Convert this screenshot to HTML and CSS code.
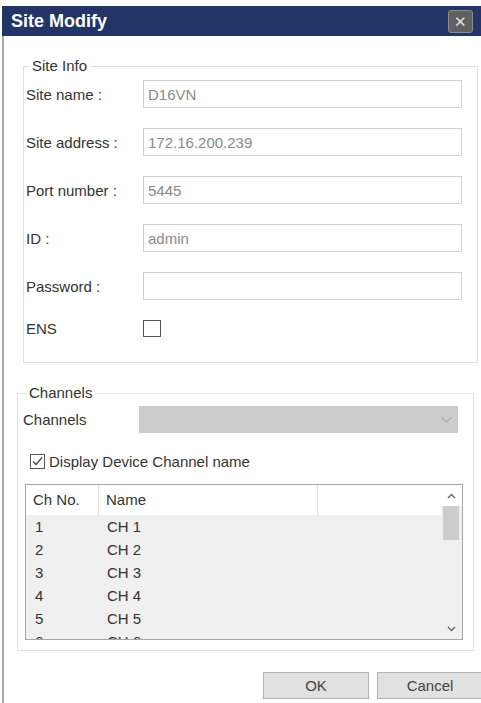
FILE: index.html
```html
<!DOCTYPE html>
<html lang="en">
<head>
  <meta charset="UTF-8">
  <title>Site Modify</title>
  <link rel="stylesheet" href="styles.css">
</head>
<body>
  <div class="window">
    <div class="titlebar">
      <span class="title">Site Modify</span>
      <span class="close">&#x2715;</span>
    </div>

    <div class="content">
      <fieldset class="group site-info">
        <legend>Site Info</legend>
        <div class="form-grid">
          <label>Site name :</label>
          <input type="text" value="D16VN" readonly>

          <label>Site address :</label>
          <input type="text" value="172.16.200.239" readonly>

          <label>Port number :</label>
          <input type="text" value="5445" readonly>

          <label>ID :</label>
          <input type="text" value="admin" readonly>

          <label>Password :</label>
          <input type="password" value="" readonly>

          <label>ENS</label>
          <span class="check-box"></span>
        </div>
      </fieldset>

      <fieldset class="group channels">
        <legend>Channels</legend>
        <div class="channel-row">
          <label>Channels</label>
          <div class="select">
            <svg width="11" height="6" viewBox="0 0 11 6"><polyline points="0.5,0.5 5.5,5 10.5,0.5" fill="none" stroke="#aaaaaa" stroke-width="1.2"/></svg>
          </div>
        </div>

        <div class="check-row">
          <span class="check-small">
            <svg width="13" height="13" viewBox="0 0 13 13"><polyline points="2,6.5 5,9.5 11,2.5" fill="none" stroke="#444" stroke-width="1.3"/></svg>
          </span>
          <span>Display Device Channel name</span>
        </div>

        <div class="list-box">
          <div class="list">
            <div class="list-head">
              <div class="cell">Ch No.</div>
              <div class="cell">Name</div>
              <div class="cell"></div>
            </div>
            <div id="rows"></div>
          </div>
          <div class="scrollbar">
            <div class="arrow up">
              <svg width="9" height="6" viewBox="0 0 9 6"><polyline points="1,5 4.5,1.5 8,5" fill="none" stroke="#666" stroke-width="1.4"/></svg>
            </div>
            <div class="thumb"></div>
            <div class="track"></div>
            <div class="arrow down">
              <svg width="9" height="6" viewBox="0 0 9 6"><polyline points="1,1 4.5,4.5 8,1" fill="none" stroke="#666" stroke-width="1.4"/></svg>
            </div>
          </div>
        </div>
      </fieldset>

      <div class="buttons">
        <button class="btn">OK</button>
        <button class="btn">Cancel</button>
      </div>
    </div>
  </div>

  <script>
    // channel list, the sixth row is only half in view
    const rows = document.getElementById('rows');
    rows.innerHTML = [1, 2, 3, 4, 5, 6].map(n => `
      <div class="list-row">
        <div class="cell num">${n}</div>
        <div class="cell">CH ${n}</div>
        <div class="cell"></div>
      </div>
    `).join('');
  </script>
</body>
</html>
```

FILE: styles.css
```css
html, body {
  margin: 0;
  width: 481px;
  height: 703px;
  overflow: hidden;
  background: #fff;
}
body {
  font-family: 'Liberation Sans', Arial, sans-serif;
  font-size: 15px;
  color: #333;
}
.window {
  margin: 6px 0 0 2px;
}
.titlebar {
  height: 30px;
  background: #233467;
  display: flex;
  align-items: center;
  justify-content: space-between;
  padding: 0 8px 0 9px;
}
.title {
  color: #fff;
  font-weight: bold;
  font-size: 18px;
}
.close {
  width: 25px;
  height: 23px;
  box-sizing: border-box;
  background: #606060;
  border: 1px solid #8c8c8c;
  border-radius: 3px;
  color: #e4e4e4;
  font-size: 15px;
  line-height: 21px;
  text-align: center;
}
.content {
  height: 667px;
  box-sizing: border-box;
  border-left: 2px solid #a9a9a9;
  padding-top: 22px;
}
.group {
  border: 1px solid #e0e0e0;
  min-width: 0;
}
.group legend {
  padding: 0 3px;
  margin-left: 3px;
  line-height: 16px;
  font-size: 15px;
}
.site-info {
  margin: 0 3px 0 19px;
  padding: 6px 14px 25px 2px;
}
.form-grid {
  display: grid;
  grid-template-columns: 117px 319px;
  row-gap: 20px;
  align-items: center;
  line-height: 17px;
}
.form-grid input {
  height: 28px;
  box-sizing: border-box;
  border: 1px solid #d0d0d0;
  padding: 0 4px;
  margin: 0;
  font-family: inherit;
  font-size: 15px;
  color: #8a8a8a;
  background: #fff;
  outline: none;
}
.check-box {
  width: 18px;
  height: 17px;
  box-sizing: border-box;
  border: 1px solid #555;
  background: #fff;
}
.channels {
  margin: 22px 7px 0 13px;
  padding: 5px 8px 10px 5px;
}
.channel-row {
  display: grid;
  grid-template-columns: 116px 319px;
  align-items: center;
}
.select {
  height: 27px;
  background: #cccccc;
  display: flex;
  align-items: center;
  justify-content: flex-end;
  padding-right: 6px;
}
.check-row {
  display: flex;
  align-items: center;
  gap: 4px;
  margin-top: 20px;
  padding-left: 7px;
  line-height: 17px;
}
.check-small {
  width: 15px;
  height: 15px;
  box-sizing: border-box;
  border: 1px solid #555;
  background: #fff;
  display: flex;
  align-items: center;
  justify-content: center;
}
.list-box {
  display: flex;
  width: 438px;
  height: 156px;
  box-sizing: border-box;
  margin: 14px 0 0 2px;
  border: 1px solid #a7a7a7;
}
.list {
  flex: 1;
  overflow: hidden;
  background: #f0f0f0;
}
.list-head, .list-row {
  display: grid;
  grid-template-columns: 73px 219px 1fr;
}
.list-head {
  height: 30px;
  line-height: 30px;
  background: #fff;
}
.list-head .cell {
  padding-left: 7px;
}
.list-head .cell:nth-child(1),
.list-head .cell:nth-child(2) {
  border-right: 1px solid #e4e4e4;
}
.list-row {
  height: 23px;
  line-height: 23px;
}
.list-row .cell {
  padding-left: 8px;
}
.list-row .cell.num {
  padding-left: 9px;
}
.scrollbar {
  width: 21px;
  display: flex;
  flex-direction: column;
  background: #f0f0f0;
}
.arrow {
  height: 21px;
  display: flex;
  align-items: center;
  justify-content: center;
}
.arrow.up {
  background: #fff;
}
.thumb {
  height: 34px;
  width: 16px;
  margin-left: 2px;
  background: #cdcdcd;
}
.track {
  flex: 1;
}
.buttons {
  display: flex;
  gap: 8px;
  margin-top: 21px;
  padding-left: 259px;
}
.btn {
  flex: none;
  width: 106px;
  height: 27px;
  margin: 0;
  border: 1px solid #b4b4b4;
  background: #e1e1e1;
  font-family: inherit;
  font-size: 15px;
  color: #444;
}
```
